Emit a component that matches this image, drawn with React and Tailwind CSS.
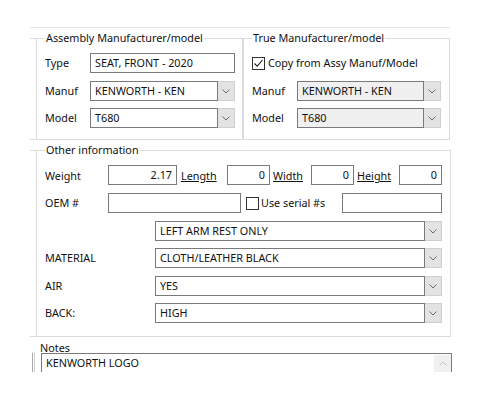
import React from "react";

const Chevron = ({ up = false, color = "#6b6b6b" }) => (
  <svg width="8" height="5" viewBox="0 0 8 5" className="block">
    <polyline
      points={up ? "0.5,4.5 4,1 7.5,4.5" : "0.5,0.5 4,4 7.5,0.5"}
      fill="none"
      stroke={color}
      strokeWidth="1"
    />
  </svg>
);

const TextBox = ({ w, value = "", right = false, disabled = false }) => (
  <div
    className={`h-[20px] border border-[#7a7a7a] flex items-center px-[4px] pt-px ${
      disabled ? "bg-[#f0f0f0]" : "bg-white"
    } ${right ? "justify-end" : ""}`}
    style={{ width: w }}
  >
    <span className="leading-none whitespace-nowrap">{value}</span>
  </div>
);

const Combo = ({ w, value, disabled = false }) => (
  <div className="flex h-[20px]">
    <div
      className={`h-[20px] border border-[#7a7a7a] flex items-center px-[4px] pt-px ${
        disabled ? "bg-[#f0f0f0]" : "bg-white"
      }`}
      style={{ width: w }}
    >
      <span className="leading-none whitespace-nowrap">{value}</span>
    </div>
    <div className="w-[17px] h-[20px] bg-[#e3e3e3] border border-l-0 border-[#cfcfcf] flex items-center justify-center">
      <Chevron />
    </div>
  </div>
);

const CheckBox = ({ checked }) => (
  <div className="w-[13px] h-[13px] border border-[#333333] bg-white flex items-center justify-center">
    {checked && (
      <svg width="11" height="11" viewBox="0 0 11 11" className="block">
        <polyline points="1.5,5.5 4.2,8.2 9.5,2" fill="none" stroke="#222" strokeWidth="1.1" />
      </svg>
    )}
  </div>
);

const GroupLabel = ({ children }) => (
  <span className="absolute left-[8px] top-[-8px] bg-white px-[1px] leading-[14px] whitespace-nowrap">
    {children}
  </span>
);

const Ext = () => <span className="absolute left-[-7px] top-[-1px] w-[6px] h-px bg-[#dcdcdc]" />;
const ExtB = () => <span className="absolute left-[-7px] bottom-[-1px] w-[6px] h-px bg-[#dcdcdc]" />;

export default function App() {
  return (
    <div
      className="w-[500px] h-[400px] bg-white overflow-hidden text-[10.8px] text-[#111] pt-[27px]"
      style={{ fontFamily: '"Noto Sans", "Open Sans", sans-serif' }}
    >
      <div className="ml-[30px] w-[420px] h-px bg-[#e3e3e3]" />

      {/* top groups */}
      <div className="flex ml-[36px] mt-[10px]">
        <div className="relative w-[207px] h-[102px] border border-[#dcdcdc] pt-[14px] pl-[8px]">
          <Ext />
          <ExtB />
          <GroupLabel>Assembly Manufacturer/model</GroupLabel>
          <div className="flex items-center h-[20px]">
            <span className="w-[45px] pt-px">Type</span>
            <TextBox w={145} value="SEAT, FRONT - 2020" />
          </div>
          <div className="flex items-center h-[20px] mt-[8px]">
            <span className="w-[45px] pt-px">Manuf</span>
            <Combo w={128} value="KENWORTH - KEN" />
          </div>
          <div className="flex items-center h-[20px] mt-[7px]">
            <span className="w-[45px] pt-px">Model</span>
            <Combo w={128} value="T680" />
          </div>
        </div>

        <div className="relative w-[207px] h-[102px] border border-[#dcdcdc] pt-[17px] pl-[8px]">
          <GroupLabel>True Manufacturer/model</GroupLabel>
          <div className="flex items-center h-[14px]">
            <CheckBox checked />
            <span className="ml-[3px] whitespace-nowrap">Copy from Assy Manuf/Model</span>
          </div>
          <div className="flex items-center h-[20px] mt-[11px]">
            <span className="w-[45px] pt-px">Manuf</span>
            <Combo w={127} value="KENWORTH - KEN" disabled />
          </div>
          <div className="flex items-center h-[20px] mt-[7px]">
            <span className="w-[45px] pt-px">Model</span>
            <Combo w={127} value="T680" disabled />
          </div>
        </div>
      </div>

      {/* other information */}
      <div className="relative ml-[36px] mt-[10px] w-[415px] h-[187px] border border-[#dcdcdc] pt-[14px] pl-[8px]">
        <Ext />
        <ExtB />
        <GroupLabel>Other information</GroupLabel>
        <div className="flex items-center h-[20px]">
          <span className="w-[63px] pt-[2px]">Weight</span>
          <TextBox w={69} value="2.17" right />
          <span className="ml-[4px] w-[46px] underline pt-[2px]">Length</span>
          <TextBox w={43} value="0" right />
          <span className="ml-[3px] w-[38px] underline pt-[2px]">Width</span>
          <TextBox w={43} value="0" right />
          <span className="ml-[3px] w-[42px] underline pt-[2px]">Height</span>
          <TextBox w={43} value="0" right />
        </div>
        <div className="flex items-center h-[20px] mt-[8px]">
          <span className="w-[63px] pt-px">OEM #</span>
          <TextBox w={133} />
          <div className="ml-[5px]">
            <CheckBox />
          </div>
          <span className="ml-[2px] w-[81px] whitespace-nowrap">Use serial #s</span>
          <TextBox w={100} />
        </div>
        <div className="flex items-center h-[20px] mt-[8px]">
          <span className="w-[110px]"></span>
          <Combo w={270} value="LEFT ARM REST ONLY" />
        </div>
        <div className="flex items-center h-[20px] mt-[7px]">
          <span className="w-[110px] pt-px">MATERIAL</span>
          <Combo w={270} value="CLOTH/LEATHER BLACK" />
        </div>
        <div className="flex items-center h-[20px] mt-[8px]">
          <span className="w-[110px] pt-px">AIR</span>
          <Combo w={270} value="YES" />
        </div>
        <div className="flex items-center h-[20px] mt-[7px]">
          <span className="w-[110px] pt-px">BACK:</span>
          <Combo w={270} value="HIGH" />
        </div>
      </div>

      {/* notes */}
      <div className="ml-[40px] mt-[5px] leading-[11px]">Notes</div>
      <div className="flex">
        <div className="ml-[32px] w-[3px] h-[19px] border-x border-l-[#a8a8a8] border-r-[#d0d0d0]" />
        <div className="ml-[6px] w-[411px] h-[19px] border-t border-x border-[#7a7a7a] flex">
          <span className="flex-1 pl-[4px] pt-[2px] leading-[14px] whitespace-nowrap">KENWORTH LOGO</span>
          <div className="w-[17px] h-[17px] mt-[1px] bg-[#f0f0f0] flex items-center justify-center">
            <Chevron up color="#c2c2c2" />
          </div>
        </div>
      </div>
    </div>
  );
}
